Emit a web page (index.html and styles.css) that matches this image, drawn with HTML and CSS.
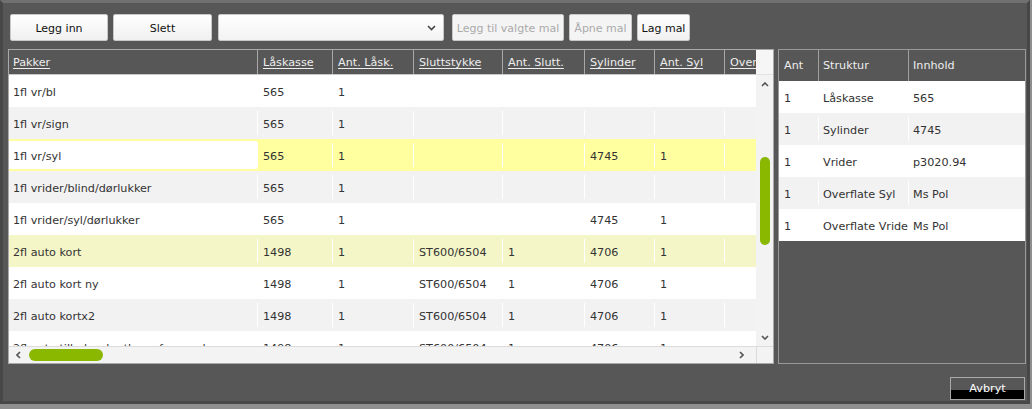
FILE: index.html
```html
<!DOCTYPE html>
<html lang="no">
<head>
<meta charset="utf-8">
<title>Pakker</title>
<link rel="stylesheet" href="styles.css">
</head>
<body>
<div class="frame">
  <div class="toolbar">
    <button class="btn w-legg">Legg inn</button>
    <button class="btn w-slett">Slett</button>
    <div class="select"><svg class="chev" width="9" height="6" viewBox="0 0 9 6"><path d="M1 1 L4.5 4.5 L8 1" fill="none" stroke="#444" stroke-width="1.6"/></svg></div>
    <button class="btn w-valgte dis">Legg til valgte mal</button>
    <button class="btn w-apne dis">Åpne mal</button>
    <button class="btn w-lag">Lag mal</button>
  </div>

  <div class="panels">
    <div class="gl">
      <div class="gl-head">
        <div class="c c1"><u>Pakker</u></div>
        <div class="c"><u>Låskasse</u></div>
        <div class="c"><u>Ant. Låsk.</u></div>
        <div class="c"><u>Sluttstykke</u></div>
        <div class="c"><u>Ant. Slutt.</u></div>
        <div class="c"><u>Sylinder</u></div>
        <div class="c"><u>Ant. Syl</u></div>
        <div class="c"><u>Overflate Syl</u></div>
        <div class="c"><u>Vrider</u></div>
      </div>
      <div class="vscroll">
        <div class="vcorner"></div>
        <div class="vtrack">
          <div class="arrow"><svg width="8" height="5" viewBox="0 0 8 5"><path d="M1 4 L4 1 L7 4" fill="none" stroke="#555" stroke-width="1.6"/></svg></div>
          <div class="vthumb"></div>
          <div class="spacer"></div>
          <div class="arrow"><svg width="8" height="5" viewBox="0 0 8 5"><path d="M1 1 L4 4 L7 1" fill="none" stroke="#555" stroke-width="1.6"/></svg></div>
        </div>
      </div>
      <div class="gl-body">
        <div class="r"><div class="c c1">1fl vr/bl</div><div class="c">565</div><div class="c">1</div><div class="c"></div><div class="c"></div><div class="c"></div><div class="c"></div><div class="c"></div><div class="c"></div></div>
        <div class="r alt"><div class="c c1">1fl vr/sign</div><div class="c">565</div><div class="c">1</div><div class="c"></div><div class="c"></div><div class="c"></div><div class="c"></div><div class="c"></div><div class="c"></div></div>
        <div class="r sel"><div class="c c1 edit">1fl vr/syl</div><div class="c">565</div><div class="c">1</div><div class="c"></div><div class="c"></div><div class="c">4745</div><div class="c">1</div><div class="c"></div><div class="c"></div></div>
        <div class="r alt"><div class="c c1">1fl vrider/blind/dørlukker</div><div class="c">565</div><div class="c">1</div><div class="c"></div><div class="c"></div><div class="c"></div><div class="c"></div><div class="c"></div><div class="c"></div></div>
        <div class="r"><div class="c c1">1fl vrider/syl/dørlukker</div><div class="c">565</div><div class="c">1</div><div class="c"></div><div class="c"></div><div class="c">4745</div><div class="c">1</div><div class="c"></div><div class="c"></div></div>
        <div class="r hov"><div class="c c1">2fl auto kort</div><div class="c">1498</div><div class="c">1</div><div class="c">ST600/6504</div><div class="c">1</div><div class="c">4706</div><div class="c">1</div><div class="c"></div><div class="c"></div></div>
        <div class="r"><div class="c c1">2fl auto kort ny</div><div class="c">1498</div><div class="c">1</div><div class="c">ST600/6504</div><div class="c">1</div><div class="c">4706</div><div class="c">1</div><div class="c"></div><div class="c"></div></div>
        <div class="r alt"><div class="c c1">2fl auto kortx2</div><div class="c">1498</div><div class="c">1</div><div class="c">ST600/6504</div><div class="c">1</div><div class="c">4706</div><div class="c">1</div><div class="c"></div><div class="c"></div></div>
        <div class="r"><div class="c c1">2fl auto tilbehør kortleser fra vender</div><div class="c">1498</div><div class="c">1</div><div class="c">ST600/6504</div><div class="c">1</div><div class="c">4706</div><div class="c">1</div><div class="c"></div><div class="c"></div></div>
      </div>
      <div class="hscroll">
        <div class="harrow"><svg width="5" height="8" viewBox="0 0 5 8"><path d="M4 1 L1 4 L4 7" fill="none" stroke="#555" stroke-width="1.6"/></svg></div>
        <div class="hthumb"></div>
        <div class="spacer"></div>
        <div class="harrow"><svg width="5" height="8" viewBox="0 0 5 8"><path d="M1 1 L4 4 L1 7" fill="none" stroke="#555" stroke-width="1.6"/></svg></div>
      </div>
      <div class="hcorner"></div>
    </div>

    <div class="gr">
      <div class="gr-row gr-head"><div class="c">Ant</div><div class="c">Struktur</div><div class="c">Innhold</div></div>
      <div class="gr-row"><div class="c">1</div><div class="c">Låskasse</div><div class="c">565</div></div>
      <div class="gr-row alt"><div class="c">1</div><div class="c">Sylinder</div><div class="c">4745</div></div>
      <div class="gr-row"><div class="c">1</div><div class="c">Vrider</div><div class="c">p3020.94</div></div>
      <div class="gr-row alt"><div class="c">1</div><div class="c">Overflate Syl</div><div class="c">Ms Pol</div></div>
      <div class="gr-row"><div class="c">1</div><div class="c">Overflate Vrider</div><div class="c">Ms Pol</div></div>
    </div>
  </div>

  <div class="footer">
    <button class="cancel">Avbryt</button>
  </div>
</div>
</body>
</html>
```

FILE: styles.css
```css
html, body {
  margin: 0;
  padding: 0;
}
body {
  background: #8f8f8f;
  font-family: "DejaVu Sans", Verdana, sans-serif;
  font-size: 11.2px;
  color: #333;
  width: 1032px;
  height: 409px;
  overflow: hidden;
}
.frame {
  box-sizing: border-box;
  width: 1030px;
  height: 404px;
  background: #575757;
  border: 3px solid #474747;
  border-top: 3px solid #707070;
  padding: 11px 0 0 5px;
}

/* toolbar */
.toolbar {
  display: flex;
  height: 27px;
  margin-left: 2px;
}
.btn {
  box-sizing: border-box;
  height: 27px;
  margin: 0 5px 0 0;
  padding: 2px 0 0 0;
  font-family: "DejaVu Sans", Verdana, sans-serif;
  font-size: 11px;
  color: #111;
  background: linear-gradient(#ffffff, #f0f0f0);
  border: 1px solid #c8c8c8;
  border-radius: 2px;
}
.btn.dis {
  color: #aaa;
  background: #f4f4f4;
}
.w-legg { width: 98px; }
.w-slett { width: 99px; margin-right: 6px; }
.w-valgte { width: 112px; }
.w-apne { width: 63px; }
.w-lag { width: 53px; }
.select {
  box-sizing: border-box;
  width: 226px;
  height: 27px;
  margin-right: 8px;
  background: linear-gradient(#ffffff, #f3f3f3);
  border: 1px solid #c8c8c8;
  border-radius: 2px;
  display: flex;
  align-items: center;
  justify-content: flex-end;
  padding-right: 7px;
}

/* panels */
.panels {
  display: flex;
  gap: 4px;
  margin-top: 8px;
  height: 315px;
}

/* left grid */
.gl {
  box-sizing: border-box;
  width: 766px;
  height: 315px;
  border: 1px solid #a9a9a9;
  display: grid;
  grid-template-columns: 747px 17px;
  grid-template-rows: 25px 271px 17px;
  background: #f3f3f3;
}
.gl-head, .r {
  display: grid;
  grid-template-columns: 248px 75px 81px 89px 82px 70px 70px 100px 100px;
  overflow: hidden;
  white-space: nowrap;
}
.gl-head {
  grid-column: 1;
  grid-row: 1;
  background: #575757;
  color: #eee;
  border-bottom: 1px solid #c9c9c9;
  box-sizing: border-box;
}
.gl-head .c {
  border-left: 1px solid #a8a8a8;
  padding: 2px 0 0 5px;
  line-height: 22px;
}
.gl-head .c1 { border-left: 0; padding-left: 4px; }
.gl-head u { text-underline-offset: 2px; }
.gl-body {
  grid-column: 1;
  grid-row: 2;
  overflow: hidden;
  background: #fff;
}
.r {
  height: 32px;
  background: #fff;
}
.r.alt { background: #f2f2f2; }
.r.sel { background: #ffff9f; }
.r.hov { background: #f4f6c7; }
.r .c {
  border-left: 1px solid #fff;
  padding: 4px 0 0 5px;
  overflow: hidden;
  margin: 4px 0;
  line-height: 20px;
  height: 20px;
}
.r .c1 { border-left: 0; padding-left: 4px; }
.r .c.edit {
  background: #fff;
  margin: 2px 0;
  padding-top: 6px;
  height: 22px;
}

.vscroll {
  grid-column: 2;
  grid-row: 1 / span 2;
  display: flex;
  flex-direction: column;
  background: #f3f3f3;
}
.vcorner {
  height: 25px;
  background: #f6f6f6;
  border-bottom: 1px solid #e2e2e2;
  box-sizing: border-box;
}
.vtrack {
  flex: 1;
  display: flex;
  flex-direction: column;
  align-items: center;
}
.arrow {
  height: 18px;
  display: flex;
  align-items: center;
  justify-content: center;
}
.vthumb {
  width: 10px;
  height: 88px;
  margin-top: 64px;
  border-radius: 5px;
  background: #8ab800;
}
.spacer { flex: 1; }
.hscroll {
  grid-column: 1;
  grid-row: 3;
  display: flex;
  align-items: center;
  background: #f3f3f3;
  border-top: 1px solid #dcdcdc;
  box-sizing: border-box;
  padding: 0 9px 0 3px;
}
.harrow {
  width: 12px;
  height: 17px;
  display: flex;
  align-items: center;
  justify-content: center;
}
.hthumb {
  width: 74px;
  height: 12px;
  margin-left: 5px;
  border-radius: 6px;
  background: #8ab800;
}
.hcorner {
  grid-column: 2;
  grid-row: 3;
  background: #f3f3f3;
  border-top: 1px solid #dcdcdc;
  border-left: 1px solid #dcdcdc;
}

/* right grid */
.gr {
  box-sizing: border-box;
  width: 248px;
  height: 315px;
  border: 1px solid #999;
  background: #575757;
}
.gr-row {
  display: grid;
  grid-template-columns: 39px 90px 116px;
  height: 32px;
  background: #fff;
  white-space: nowrap;
}
.gr-row.alt { background: #f2f2f2; }
.gr-row .c {
  overflow: hidden;
  padding: 3px 0 0 5px;
  border-left: 1px solid #fff;
  margin: 4px 0;
  line-height: 21px;
  height: 21px;
}
.gr-row .c:first-child { border-left: 0; padding-left: 5px; }
.gr-head {
  background: #575757;
  color: #eee;
  height: 31px;
}
.gr-head .c {
  margin: 0;
  padding-top: 1px;
  height: 30px;
  line-height: 30px;
  border-left: 1px solid #a0a0a0;
}
.gr-row .c:nth-child(2) { padding-left: 4px; }
.gr-row .c:nth-child(3) { padding-left: 4px; }

/* footer */
.footer {
  display: flex;
  justify-content: flex-end;
  margin-top: 13px;
  padding-right: 2px;
}
.cancel {
  box-sizing: border-box;
  width: 75px;
  height: 23px;
  padding: 1px 0 0 0;
  font-family: "DejaVu Sans", Verdana, sans-serif;
  font-size: 11.2px;
  color: #fff;
  border: 1px solid #a9a9a9;
  background: linear-gradient(#575757 0, #575757 58%, #000 58%, #000 100%);
  line-height: 20px;
}
```
